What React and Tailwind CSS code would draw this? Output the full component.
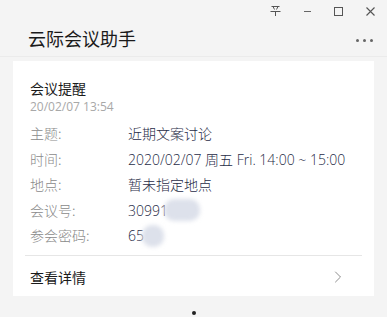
import { ChevronRight } from 'lucide-react';

const rows = [
  { label: '主题:', value: '近期文案讨论' },
  { label: '时间:', value: '2020/02/07 周五 Fri. 14:00 ~ 15:00' },
  { label: '地点:', value: '暂未指定地点' },
  { label: '会议号:', value: '30991', blur: 'w-[36px] -ml-[4px]' },
  { label: '参会密码:', value: '65', blur: 'w-[22px] -ml-[2px]' },
];

const latin = { fontFamily: '"Open Sans", "Noto Sans CJK SC", sans-serif' };

const App = () => {
  return (
    <div
      className="flex h-[317px] w-[387px] flex-col overflow-hidden bg-[#f4f4f4]"
      style={{ fontFamily: '"Noto Sans CJK SC", "Noto Sans", sans-serif' }}
    >
      {/* window controls */}
      <div className="flex h-[20px] items-center justify-end gap-[23px] pr-[12px] pt-[2px] text-[#555]">
        <svg width="11" height="10" viewBox="0 0 11 10" fill="none" stroke="#555" strokeWidth="1">
          <path d="M1.5 0.5h8M3 0.5l1.5 3M8 0.5l-1.5 3M0.5 5.5h10M5.5 5.5v4.5" />
        </svg>
        <div className="h-px w-[7px] bg-[#666]" />
        <div className="h-[9px] w-[9px] border border-[#555]" />
        <svg width="9" height="9" viewBox="0 0 9 9" stroke="#555" strokeWidth="1.1">
          <path d="M0.5 0.5l8 8M8.5 0.5l-8 8" />
        </svg>
      </div>

      {/* title */}
      <div className="flex h-[37px] items-center justify-between border-b border-[#ebebeb] pl-[28px] pr-[14px]">
        <span className="text-[18px] leading-none text-[#1a1a1a]">云际会议助手</span>
        <div className="flex gap-[4px] pt-[4px]">
          <span className="h-[3px] w-[3px] rounded-full bg-[#666]" />
          <span className="h-[3px] w-[3px] rounded-full bg-[#666]" />
          <span className="h-[3px] w-[3px] rounded-full bg-[#666]" />
        </div>
      </div>

      {/* card */}
      <div className="mx-[13px] mt-[4px] bg-white pt-[18px]">
        <div className="px-[17px]">
          <div className="text-[14px] leading-[18px] text-[#1a1a1a]">会议提醒</div>
          <div className="mt-[2px] text-[12px] leading-[16px] text-[#a8a8a8]" style={latin}>
            20/02/07 13:54
          </div>

          <div className="mt-[6px] flex flex-col">
            {rows.map((r) => (
              <div key={r.label} className="flex h-[25.5px] items-center text-[14px] font-light">
                <span className="w-[98px] text-[#8a8a8a]">{r.label}</span>
                <span className="text-[#1f2c47]" style={latin}>
                  {r.value}
                </span>
                {r.blur && (
                  <span className={`h-[22px] rounded-[10px] bg-[#dde1eb] blur-[2px] ${r.blur}`} />
                )}
              </div>
            ))}
          </div>
        </div>

        <div className="mx-[12px] mt-[6px] h-px bg-[#e6e6e6]" />

        <div className="flex h-[40px] items-center justify-between pl-[17px] pr-[26px] pt-[3px]">
          <span className="text-[14px] text-[#1a1a1a]">查看详情</span>
          <ChevronRight size={20} strokeWidth={1} className="text-[#777]" />
        </div>
      </div>

      <div className="flex justify-center pt-[15px]">
        <span className="h-[4px] w-[4px] rounded-full bg-[#222]" />
      </div>
    </div>
  );
};

export default App;
